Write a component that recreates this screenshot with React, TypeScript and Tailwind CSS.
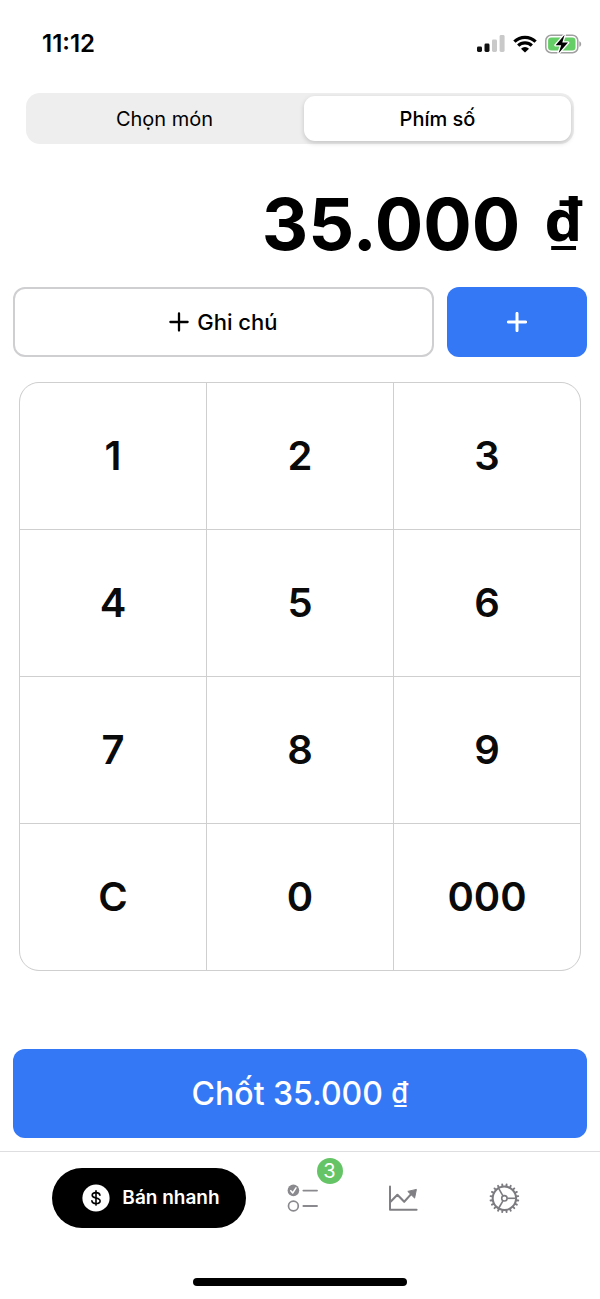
import { useState } from "react";

const KEYS = ["1", "2", "3", "4", "5", "6", "7", "8", "9", "C", "0", "000"];
const TEETH = Array.from({ length: 20 }, (_, i) => i * 18 + 9);

function SignalIcon() {
  return (
    <svg width="28" height="18" viewBox="0 0 28 18" aria-hidden="true">
      <rect x="0" y="11.5" width="5" height="5.5" rx="1.4" fill="#111" />
      <rect x="7.5" y="8.5" width="5" height="8.5" rx="1.4" fill="#111" />
      <rect x="15" y="4.5" width="5" height="12.5" rx="1.4" fill="#c9c9c9" />
      <rect x="22.6" y="0" width="5" height="17" rx="1.4" fill="#c9c9c9" />
    </svg>
  );
}

function WifiIcon() {
  return (
    <svg width="24" height="18" viewBox="0 0 24 18" aria-hidden="true">
      <g fill="none" stroke="#000" strokeWidth="3.2">
        <path d="M1.4 6.7 A15 15 0 0 1 22.6 6.7" />
        <path d="M5.2 10.6 A9.6 9.6 0 0 1 18.8 10.6" />
      </g>
      <path d="M12 17.6 L8 13.7 A5.8 5.8 0 0 1 16 13.7 Z" fill="#000" />
    </svg>
  );
}

function BatteryIcon() {
  return (
    <svg width="37" height="20" viewBox="0 0 37 20" aria-hidden="true">
      <rect x="0.8" y="1.3" width="32" height="17.4" rx="5.3" fill="none" stroke="#a0a0a0" strokeWidth="1.5" />
      <rect x="3.1" y="3.6" width="27.4" height="12.8" rx="3.2" fill="#65ce67" />
      <path d="M34.3 7.2 C36.8 8 36.8 12 34.3 12.8 Z" fill="#a0a0a0" />
      <path
        d="M19.6 0.8 L10.6 11.2 L16.2 11.2 L13.6 19.2 L23 8.6 L17.3 8.6 Z"
        fill="#000"
        stroke="#fff"
        strokeWidth="2.6"
        strokeLinejoin="round"
        paintOrder="stroke"
      />
    </svg>
  );
}

function PlusIcon({ thin = false }: { thin?: boolean }) {
  return (
    <svg width="20" height="20" viewBox="0 0 20 20" aria-hidden="true">
      <path
        d="M10 1.4 V18.6 M1.4 10 H18.6"
        fill="none"
        stroke="currentColor"
        strokeWidth={thin ? 2.3 : 3}
        strokeLinecap="round"
      />
    </svg>
  );
}

function DollarIcon() {
  return (
    <svg width="28" height="28" viewBox="0 0 28 28" aria-hidden="true">
      <circle cx="14" cy="14" r="13.6" fill="#fff" />
      <g fill="none" stroke="#000" strokeWidth="1.6" strokeLinecap="round">
        <path d="M14 6.9 V21.1" />
        <path d="M17.9 11.2 C17.6 9.4 16.1 8.6 14 8.6 C11.8 8.6 10.2 9.7 10.2 11.3 C10.2 13 11.7 13.5 14 14 C16.5 14.5 18.1 15.1 18.1 16.9 C18.1 18.6 16.4 19.5 14 19.5 C11.7 19.5 10.1 18.6 9.9 16.8" />
      </g>
    </svg>
  );
}

function ChecklistIcon() {
  return (
    <svg width="32" height="30" viewBox="0 0 32 30" aria-hidden="true">
      <circle cx="6.4" cy="7.4" r="5.8" fill="#8a8a8e" />
      <path d="M3.8 7.7 L5.7 10 L9 4.9" fill="none" stroke="#fff" strokeWidth="1.5" strokeLinecap="round" strokeLinejoin="round" />
      <circle cx="6.4" cy="23" r="4.9" fill="none" stroke="#8a8a8e" strokeWidth="1.7" />
      <path d="M16.4 7.6 H30 M16.4 23 H30" stroke="#8a8a8e" strokeWidth="1.9" strokeLinecap="round" />
    </svg>
  );
}

function ChartIcon() {
  return (
    <svg width="30" height="28" viewBox="0 0 30 28" aria-hidden="true">
      <g fill="none" stroke="#808084" strokeLinecap="round" strokeLinejoin="round">
        <path d="M1 2.4 V25.8 H27.6" strokeWidth="2" />
        <path d="M1.8 17.6 L8.4 10.8 L15.2 17.8 L22.8 9.4" strokeWidth="2.1" />
      </g>
      <path d="M27.4 5.4 L18.8 7.4 L25.6 14.1 Z" fill="#808084" stroke="#808084" strokeLinejoin="round" />
    </svg>
  );
}

function GearIcon() {
  return (
    <svg width="32" height="32" viewBox="0 0 32 32" aria-hidden="true">
      <g fill="none" stroke="#7c7c80">
        <circle cx="15.4" cy="16.3" r="11.7" strokeWidth="2" />
        <circle cx="15.4" cy="16.3" r="2.7" strokeWidth="1.6" />
        {[0, 120, 240].map((a) => (
          <path key={a} d="M18.3 16.3 H26.6" strokeWidth="1.6" transform={`rotate(${a} 15.4 16.3)`} />
        ))}
        {TEETH.map((a) => (
          <path key={a} d="M27.6 16.3 H29.4" strokeWidth="1.9" strokeLinecap="round" transform={`rotate(${a} 15.4 16.3)`} />
        ))}
      </g>
    </svg>
  );
}

export default function App() {
  const [amount, setAmount] = useState("35000");
  const [tab, setTab] = useState("keypad");
  const formatted = amount.replace(/\B(?=(\d{3})+$)/g, ".");

  const press = (key: string) =>
    setAmount((value) => (key === "C" ? "0" : String(Number(value + key)).slice(0, 9)));

  return (
    <div className="flex min-h-screen flex-col bg-white font-['Inter','Noto_Sans',sans-serif] text-black">
      <header className="flex h-[87px] items-center justify-between pr-[18px] pl-[42px]">
        <span className="text-2xl font-semibold">11:12</span>
        <div className="flex items-center gap-2">
          <SignalIcon />
          <WifiIcon />
          <BatteryIcon />
        </div>
      </header>

      <main className="flex flex-1 flex-col px-[13px] pt-1.5">
        <div role="tablist" className="mx-[13px] grid h-[51px] grid-cols-2 rounded-[14px] bg-[#eeeeee] p-[3px] text-xl">
          <button
            type="button"
            role="tab"
            aria-selected={tab === "items"}
            onClick={() => setTab("items")}
            className={tab === "items" ? "rounded-[11px] bg-white font-medium shadow-md" : "rounded-[11px]"}
          >
            Chọn món
          </button>
          <button
            type="button"
            role="tab"
            aria-selected={tab === "keypad"}
            onClick={() => setTab("keypad")}
            className={
              tab === "keypad"
                ? "ml-1 rounded-[11px] bg-white font-medium shadow-[0_2px_5px_rgba(0,0,0,0.18)]"
                : "ml-1 rounded-[11px]"
            }
          >
            Phím số
          </button>
        </div>

        <output className="mt-8 flex h-24 items-center justify-end pr-1">
          <span className="flex items-start gap-6 font-bold">
            <span className="text-[72px] leading-none">{formatted}</span>{" "}
            <span className="font-['Noto_Sans',sans-serif] text-[60px] leading-none">₫</span>
          </span>
        </output>

        <div className="mt-[15px] grid h-[70px] grid-cols-[3fr_1fr] gap-[13px]">
          <button
            type="button"
            className="flex items-center justify-center gap-2 rounded-xl border-2 border-[#cfcfd2] text-[22px] font-medium"
          >
            <PlusIcon thin />
            Ghi chú
          </button>
          <button
            type="button"
            aria-label="Thêm"
            className="flex items-center justify-center rounded-xl bg-[#3478f6] text-white"
          >
            <PlusIcon />
          </button>
        </div>

        <div className="mx-1.5 mt-[25px] grid grid-cols-3 gap-px overflow-hidden rounded-[20px] border border-[#cfcfcf] bg-[#cfcfcf]">
          {KEYS.map((key) => (
            <button
              key={key}
              type="button"
              onClick={() => press(key)}
              className="h-[146px] bg-white text-[40px] font-semibold text-[#0a0a0a] active:bg-gray-100"
            >
              {key}
            </button>
          ))}
        </div>

        <button
          type="button"
          className="mt-auto mb-[13px] flex h-[89px] items-center justify-center rounded-xl bg-[#3478f6] font-medium text-white"
        >
          <span className="flex items-start gap-2">
            <span className="text-[32px] leading-none">Chốt {formatted}</span>{" "}
            <span className="font-['Noto_Sans',sans-serif] text-[28px] leading-none">₫</span>
          </span>
        </button>
      </main>

      <footer className="border-t border-[#dedee0] pt-4">
        <nav className="flex h-[60px] pr-[45px] pl-[52px]">
          <button
            type="button"
            className="mr-1.5 flex w-[194px] items-center justify-center gap-3 rounded-full bg-black pl-1 text-[19px] font-semibold text-white"
          >
            <DollarIcon />
            Bán nhanh
          </button>
          <button type="button" aria-label="Đơn hàng" className="relative flex flex-1 items-center justify-center">
            <ChecklistIcon />
            <span className="absolute -top-[10px] left-1/2 ml-[14px] flex size-[26px] items-center justify-center rounded-full bg-[#65c466] text-xl text-white">
              3
            </span>
          </button>
          <button type="button" aria-label="Báo cáo" className="flex flex-1 items-center justify-center">
            <ChartIcon />
          </button>
          <button type="button" aria-label="Cài đặt" className="flex flex-1 items-center justify-center">
            <GearIcon />
          </button>
        </nav>
        <div className="mx-auto mt-[50px] mb-[13px] h-2 w-[214px] rounded-full bg-black" />
      </footer>
    </div>
  );
}
